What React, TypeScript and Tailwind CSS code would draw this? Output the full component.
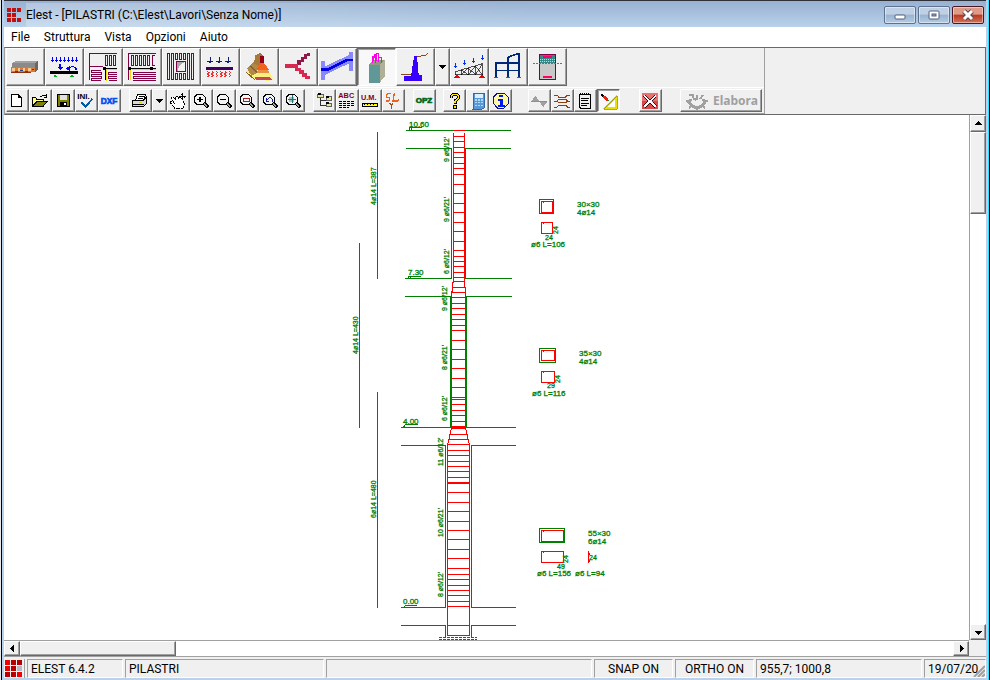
import type { ReactNode } from "react";

const RAISED =
  "border border-t-white border-l-white border-r-[#696969] border-b-[#696969] bg-[#f0f0f0] shadow-[inset_-1px_-1px_#a0a0a0]";
const PRESSED =
  "border border-t-[#696969] border-l-[#696969] border-r-white border-b-white bg-[#f8f8f8] shadow-[inset_1px_1px_#a0a0a0]";
const SUNKEN = "border border-t-[#a0a0a0] border-l-[#a0a0a0] border-r-white border-b-white";

/* Icons are drawn on a grid of three units per pixel. */
function Big({ label, box, pressed, children }: { label: string; box: string; pressed?: boolean; children: ReactNode }) {
  return (
    <button aria-label={label} className={"h-[38px] w-[39px] shrink-0 " + (pressed ? PRESSED : RAISED)}>
      <svg viewBox={box} className="block h-9 w-[37px]" fill="none" strokeWidth="3" shapeRendering="crispEdges">
        {children}
      </svg>
    </button>
  );
}

function Small({ label, box, pressed, children }: { label: string; box: string; pressed?: boolean; children: ReactNode }) {
  return (
    <button aria-label={label} className={"h-[23px] w-[23px] shrink-0 " + (pressed ? PRESSED : RAISED)}>
      <svg viewBox={box} className="block h-[21px] w-[21px]" fill="none" strokeWidth="3" shapeRendering="crispEdges">
        {children}
      </svg>
    </button>
  );
}

function Drop({ label, className }: { label: string; className: string }) {
  return (
    <button aria-label={label} className={"flex w-[15px] shrink-0 items-center justify-center " + className + " " + RAISED}>
      <svg viewBox="0 0 7 4" className="h-1 w-[7px]" shapeRendering="crispEdges">
        <path d="M0 0h7L3.500 4z" fill="#000" />
      </svg>
    </button>
  );
}

function Lens({ x, children }: { x: number; children?: ReactNode }) {
  return (
    <g transform={`translate(${x} 0)`}>
      <path d="M43 308l14 14" stroke="#000" strokeWidth="9" />
      <path d="M45 311l9 9" stroke="#a0a0a0" strokeWidth="3" />
      <path d="M24 283h15l9 9v13l-9 9H24l-9-9v-13z" fill="#f4f4f4" stroke="#000" />
      {children}
    </g>
  );
}

function Logo({ className }: { className: string }) {
  return (
    <svg viewBox="0 0 17 17" className={className} shapeRendering="crispEdges">
      <path d="M0 0h5v5H0zM0 6h5v5H0zM12 12h5v5h-5z" fill="#f00000" />
      <path d="M6 0h5v5H6zM12 0h5v5h-5zM6 6h5v5H6zM0 12h5v5H0zM6 12h5v5H6z" fill="#b80000" />
      <path d="M12 6h5v5h-5z" fill="#b8b8c8" />
    </svg>
  );
}

function TitleLogo() {
  return (
    <svg viewBox="0 0 14 14" className="ml-[3px] h-3.5 w-3.5" shapeRendering="crispEdges">
      <path d="M0 0h4v4H0zM5 0h4v4H5zM10 0h4v4h-4zM0 5h4v4H0zM5 5h4v4H5zM0 10h4v4H0zM5 10h4v4H5zM10 10h4v4h-4z" fill="#c01010" />
    </svg>
  );
}

function TitleBar() {
  const box =
    "flex h-[18px] w-8 items-center justify-center rounded-[2px] border shadow-[inset_0_0_0_1px_rgba(255,255,255,0.45)] ";
  const pale = "border-[#5d728e] bg-[linear-gradient(#c0d0e4_45%,#98b2d0_50%,#b4cce4)]";
  return (
    <header className="flex h-[27px] shrink-0 items-center border-t border-[#303038] bg-[linear-gradient(#98b1d1,#b9d1ea)] pr-0.5 pt-0.5">
      <TitleLogo />
      <h1 className="ml-[5px] flex-1 whitespace-nowrap bg-[linear-gradient(90deg,rgba(255,255,255,0.25),transparent_60%)] font-[Roboto,sans-serif] text-xs leading-6 text-black">
        Elest - [PILASTRI (C:\Elest\Lavori\Senza Nome)]
      </h1>
      <div className="flex gap-0.5">
        <button aria-label="Minimize" className={box + pale}>
          <svg viewBox="0 0 12 12" className="h-3 w-3">
            <rect x="1" y="6" width="10" height="4" rx="1" fill="#fff" stroke="#50607a" />
          </svg>
        </button>
        <button aria-label="Restore" className={box + pale}>
          <svg viewBox="0 0 12 12" className="h-3 w-3">
            <rect x="1" y="2" width="10" height="8" rx="1" fill="#fff" stroke="#50607a" />
            <rect x="4" y="5" width="4" height="2" fill="#8da6c4" stroke="#50607a" />
          </svg>
        </button>
        <button
          aria-label="Close"
          className={box + "border-[#4a1820] bg-[linear-gradient(#e09a88_45%,#b83a20_50%,#d4715a)]"}
        >
          <svg viewBox="0 0 12 12" className="h-3 w-3">
            <path d="M2 2l8 8M10 2l-8 8" stroke="#584858" strokeWidth="5" />
            <path d="M2 2l8 8M10 2l-8 8" stroke="#fff" strokeWidth="3" />
          </svg>
        </button>
      </div>
    </header>
  );
}

function Menu() {
  return (
    <nav className="flex h-[20px] shrink-0 items-center gap-3.5 bg-white pl-[7px] font-[Roboto,sans-serif] text-xs text-black">
      {["File", "Struttura", "Vista", "Opzioni", "Aiuto"].map((m) => (
        <button key={m}>{m}</button>
      ))}
    </nav>
  );
}

function MainTools() {
  return (
    <div role="toolbar" aria-label="Moduli" className="flex h-[38px] pl-px">
      <Big label="Solai" box="21 150 111 108">
        <path d="M36 193l13-8h66v10l-10 8H36z" fill="#8a8a8a" />
        <path d="M36 193l13-8h66l-9 8z" fill="#a2a2a2" />
        <path d="M106 193l9-8v25l-9 9z" fill="#686868" />
        <path d="M34 204h71v15H34z" fill="#e07828" />
        <path d="M37 208h8v7h-8zM54 208h6v7h-6zM69 208h6v7h-6zM85 208h8v7h-8z" fill="#f8c890" />
        <path d="M46 216h7M60 214h9M76 216h9M96 210h6" stroke="#204890" />
        <path d="M34 221h60" stroke="#903010" />
      </Big>
      <Big label="Travi" box="138 150 111 108">
        <path d="M157 175v15M169 175v15M181 175v15M193 175v15M205 175v15M217 175v15M229 175v15" stroke="#00f" />
        <path d="M153 184h9M165 184h9M177 184h9M189 184h9M201 184h9M213 184h9M225 184h9" stroke="#00f" />
        <path d="M181 195v10" stroke="#0000e8" strokeWidth="6" />
        <path d="M172 204h18l-9 9zM197 209l12-9v15z" fill="#00f" />
        <path d="M205 208l10-5h6l7 6v5" stroke="#00f" strokeWidth="4" />
        <path d="M150 216h84v9h-84z" fill="#000" />
        <path d="M159 235l7-9 8 9zM209 235l7-9 8 9z" fill="#00b020" />
      </Big>
      <Big label="Solaio a campi" box="255 150 111 108">
        <g stroke="#800048">
          <path d="M351 163h-82v80M269 202h40M316 169h6v29h-6zM328 169h6v29h-6zM340 169h6v29h-6z" />
          <path d="M304 213h-30v6h30v6h-30v6h30v6h-30v6h30M351 219h-25v6h25M351 231h-25v6h25M326 243h25" />
        </g>
        <path d="M351 207h-36v37" stroke="#000" />
        <path d="M318 211v34M316 210h35" stroke="#f0d820" />
        <path d="M309 204h9v9h-9z" fill="#000" />
      </Big>
      <Big label="Solaio continuo" box="372 150 111 108">
        <g stroke="#800048">
          <path d="M468 163h-82v80M394 169h6v29h-6zM406 169h6v29h-6zM418 169h6v29h-6zM430 169h6v29h-6zM442 169h6v29h-6zM466 169h-9v29h9" />
          <path d="M468 219h-68v6h68M468 231h-68v6h68M400 243h68" />
        </g>
        <path d="M388 207h80" stroke="#000" />
        <path d="M396 210h72M391 213v31" stroke="#f0d820" />
        <path d="M384 204h9v9h-9zM450 204h9v9h-9z" fill="#000" />
      </Big>
      <Big label="Piastre" box="489 150 111 108">
        <path d="M503 163h6v79h-6zM515 163h6v79h-6zM575 163h6v79h-6zM563 163h6v79h-6zM527 163h6v18h-6zM539 163h6v18h-6zM551 163h6v18h-6zM527 224h6v18h-6zM539 224h6v18h-6zM551 224h6v18h-6z" stroke="#800048" />
        <path d="M528 187h28v30h-28z" fill="#f0f0f0" stroke="#800048" />
        <path d="M530 189h25l-15 9-8 18z" fill="#a8a8a8" />
      </Big>
      <Big label="Travi di fondazione" box="606 150 111 108">
        <path d="M630 174v19M657 174v19M684 174v19M622 186h17M649 186h17M676 186h17M627 190h7M654 190h7M681 190h7" stroke="#102070" />
        <path d="M618 204h81v9h-81z" fill="#400060" />
        <path d="M622 217l5 4-5 4 5 4-5 5M635 217l5 4-5 4 5 4-5 5M648 217l5 4-5 4 5 4-5 5M661 217l5 4-5 4 5 4-5 5M674 217l5 4-5 4 5 4-5 5M687 217l5 4-5 4 5 4-5 5" stroke="#f03030" />
      </Big>
      <Big label="Plinti" box="723 150 111 108">
        <path d="M738 218l23-23 38 10 20 34-12 6-39-2z" fill="#f8f080" />
        <path d="M742 208l20-22 15 6-6 29-17 10z" fill="#b08848" />
        <path d="M765 170l16-8 9 8-9 31-19-6z" fill="#a87838" />
        <path d="M779 170h13v24h-13z" fill="#900018" />
        <path d="M778 193h15l14 20h-38z" fill="#f06020" />
        <path d="M767 221l9-8h27l5 8z" fill="#e89040" />
        <path d="M764 233h43l9 9h-48z" fill="#c84850" />
        <path d="M738 219l26 23M752 202l20 19" stroke="#886030" />
      </Big>
      <Big label="Scale" box="0 18 111 108">
        <path d="M51 67V52h12V43h9V34h9v-4h9v8h-9v9h-9v9h-9v10z" fill="#901848" />
        <path d="M15 63h39v12h9v7h9v9h9v9h9v9H75v-8h-9v-9h-9v-9H45v-7H15z" fill="#d82850" />
      </Big>
      <Big label="Travi inclinate" box="117 18 111 108">
        <path d="M123 54h12v56h-12zM207 27h12v56h-12z" fill="#8888ff" />
        <path d="M135 70l72-34v25l-72 35z" fill="#8888ff" />
        <path d="M123 80h21l57-29h18" stroke="#0000e8" strokeWidth="8" />
      </Big>
      <Big label="Pilastri" box="234 18 111 108" pressed>
        <path d="M267 66l16-16h32l-15 16z" fill="#909880" />
        <path d="M267 66h32v53h-32z" fill="#609898" />
        <path d="M299 66l16-16v49l-16 20z" fill="#b0b098" />
        <path d="M276 61V40h6v-7h5v26M288 55V31h6v26M294 42h9v19M281 54V42h9" stroke="#ff00e8" />
      </Big>
      <Big label="Muri" box="351 18 111 108">
        <path d="M363 95h32M408 40h12l9-4h9l6-6" stroke="#884818" />
        <path d="M402 40h9l5 55h10v18h-55V99h22z" fill="#3800ff" />
      </Big>
      <Drop label="Altri muri" className="h-[38px]" />
      <Big label="Capriate" box="513 18 111 108">
        <path d="M527 60v15M554 51v15M581 45v15M608 36v15M522 69h10M549 60h10M576 54h10M603 45h10" stroke="#0030f0" />
        <path d="M526 95V86L608 62V95zM543 95V81L565 95V75L586 95V69L607 94M543 95L565 75M565 95L586 69M586 95L607 63" stroke="#000" strokeWidth="2" />
        <path d="M530 95l9 9h-18zM605 95l9 9h-18z" fill="#f00000" />
      </Big>
      <Big label="Telai" box="630 18 111 108">
        <path d="M648 59v43M684 43v59M716 30v72M645 59h71M645 82h71M684 43l18-7 14-5" stroke="#002878" strokeWidth="5" />
        <path d="M642 104h12M678 104h12M710 104h12" stroke="#088058" />
      </Big>
      <Big label="Sezioni" box="747 18 111 108">
        <path d="M778 34h49v75h-49z" fill="#c8c8c8" stroke="#800048" />
        <path d="M781 37h43v23h-43z" fill="#388888" />
        <path d="M780 49h44M780 55h44" stroke="#c0d8d8" strokeDasharray="3 3" />
        <path d="M788 42h29M788 102h29" stroke="#ff0068" strokeWidth="5" />
        <path d="M759 61h87" stroke="#707070" strokeDasharray="6 3" />
      </Big>
    </div>
  );
}

function SmallTools() {
  return (
    <div role="toolbar" aria-label="Comandi" className="mt-px flex h-[26px] border-t border-white pl-px pt-px">
      <Small label="Nuovo" box="21 270 63 63">
        <path d="M35 284h20l9 9v26H35zM55 284v9h9" fill="#fff" stroke="#000" />
      </Small>
      <Small label="Apri" box="90 270 63 63">
        <path d="M98 317v-24h9l4 5h18v7" fill="#ffff80" stroke="#000" />
        <path d="M98 318l13-14h32l-13 14z" fill="#808000" stroke="#000" />
        <path d="M121 288h5l4-3h5l5 6M140 282v9h-8" stroke="#000" />
      </Small>
      <Small label="Salva" box="159 270 63 63">
        <path d="M171 284h36v34h-34l-2-2z" fill="#808000" stroke="#000" />
        <path d="M179 284h22v17h-22z" fill="#e0e0e0" />
        <path d="M179 306h22v12h-22z" fill="#000" />
        <path d="M192 308h6v8h-6z" fill="#fff" />
      </Small>
      <Small label="File INI" box="228 270 63 63">
        <text x="232" y="297" fontSize="24" fontWeight="bold" fontFamily="'Liberation Sans',sans-serif" fill="#000">INI.</text>
        <path d="M244 308l12 12 22-24" stroke="#0058a8" strokeWidth="6" />
      </Small>
      <Small label="Esporta DXF" box="297 270 63 63">
        <text x="302" y="312" fontSize="25" fontWeight="bold" fontFamily="'Liberation Sans',sans-serif" fill="#0050f0" stroke="#0050f0" strokeWidth="2">DXF</text>
      </Small>
      <div className="w-2" />
      <Small label="Stampa" box="390 270 63 63">
        <path d="M407 299l6-15h24l-6 15" fill="#fff" stroke="#000" />
        <path d="M398 300h33l8-8v19l-8 8h-33z" fill="#d8d8d8" stroke="#000" />
        <path d="M417 290h14M415 295h14M399 313h34" stroke="#000" />
        <path d="M417 307h9" stroke="#e8d800" />
      </Small>
      <Drop label="Opzioni di stampa" className="h-[23px]" />
      <Small label="Sposta vista" box="504 270 63 63">
        <path d="M524 324l-14-17 3-4 9 5-7-14 4-3 8 8-1-9 6-1 4 7 4-4 5 4 4 8 4 8-3 12z" fill="#fff" stroke="#000" strokeDasharray="6 2" />
        <path d="M546 280v19M537 290h20M543 284h6M543 296h6M540 287v6M552 287v6" stroke="#000" />
      </Small>
      <Small label="Zoom avanti" box="573 270 63 63">
        <Lens x={568}><path d="M32 290v17M24 299h17" stroke="#000" strokeWidth="4" /></Lens>
      </Small>
      <Small label="Zoom indietro" box="642 270 63 63">
        <Lens x={637}><path d="M24 299h17" stroke="#000" strokeWidth="4" /></Lens>
      </Small>
      <Small label="Zoom finestra" box="711 270 63 63">
        <Lens x={706}><path d="M23 294h18v9H23z" stroke="#a02020" /></Lens>
      </Small>
      <Small label="Zoom precedente" box="780 270 63 63">
        <Lens x={775}><path d="M24 303v-9M24 303h9M25 302l8-9h5l3 5v7" stroke="#1020a0" /></Lens>
      </Small>
      <Small label="Zoom tutto" box="849 270 63 63">
        <Lens x={844}><path d="M24 291h15v15H24z" fill="#90c8c0" /><path d="M32 286v24M21 299h23" stroke="#207070" /></Lens>
      </Small>
      <div className="w-2" />
      <Small label="Struttura dati" box="102 138 63 63">
        <path d="M120 162v22h18M120 168h18" stroke="#303030" />
        <path d="M113 150h17v11h-17zM138 158h17v11h-17zM138 177h17v11h-17z" fill="#e8e8a0" stroke="#606060" />
        <path d="M113 150h9M138 158h9M138 177h9" stroke="#000" strokeWidth="5" />
      </Small>
      <Small label="Testi" box="171 138 63 63">
        <text x="175" y="162" fontSize="22" fontWeight="bold" fontFamily="'Liberation Sans',sans-serif" fill="#800010">ABC</text>
        <path d="M177 172h48M177 178h48M177 184h48M177 190h30" stroke="#000" strokeDasharray="9 3" />
      </Small>
      <Small label="Unita di misura" box="240 138 63 63">
        <text x="243" y="168" fontSize="22" fontWeight="bold" fontFamily="'Liberation Sans',sans-serif" fill="#800010">U.M.</text>
        <path d="M247 178h45v9h-45z" fill="#ffff00" stroke="#000" />
        <path d="M254 177v5M263 177v5M272 177v5M281 177v5" stroke="#000" />
      </Small>
      <Small label="Stato limite" box="309 138 63 63">
        <path d="M334 149h-10l-4 5v5l9 3v5l-3 4h-8M343 148l-4 23h15l3-5" stroke="#f06020" strokeWidth="4" />
        <path d="M328 176l6 7 6-7M334 180v16" stroke="#a05020" strokeWidth="4" />
      </Small>
      <div className="w-2" />
      <Small label="Opzioni" box="402 138 63 63">
        <text x="407" y="178" fontSize="24" fontWeight="bold" fontFamily="'Liberation Sans',sans-serif" fill="#003818" stroke="#007020" strokeWidth="2">OPZ</text>
      </Small>
      <div className="w-[7px]" />
      <Small label="Guida" box="492 138 63 63">
        <path d="M514 162v-6l5-5h10l6 5v7l-10 8v8" stroke="#000" strokeWidth="9" />
        <path d="M514 162v-6l5-5h10l6 5v7l-10 8v7" stroke="#ffe800" strokeWidth="4" />
        <path d="M521 185h9v9h-9z" fill="#ffe800" stroke="#000" />
      </Small>
      <Small label="Calcolatrice" box="561 138 63 63">
        <path d="M582 147h31v44l-6 4h-28z" fill="#5898d8" stroke="#3068a8" />
        <path d="M586 151h23v10h-23z" fill="#d8f0ff" />
        <path d="M585 168h24M585 176h24M585 184h24" stroke="#b0d8f8" strokeWidth="4" strokeDasharray="5 4" />
      </Small>
      <Small label="Informazioni" box="630 138 63 63">
        <path d="M652 147h20l14 14v16l-14 15h-20l-13-15v-16z" fill="#fff8a0" stroke="#101080" />
        <path d="M658 152h11v8h-11zM654 164h15v19h6v6h-22v-6h6v-13h-5z" fill="#0018f0" />
      </Small>
      <div className="w-4" />
      <Small label="Diagrammi" box="750 138 63 63">
        <path d="M757 171l12-15 12 15zM779 171h27l-13 18z" fill="#a0a0a0" />
        <path d="M757 171h48" stroke="#909090" />
      </Small>
      <Small label="Armature" box="819 138 63 63">
        <path d="M825 153h9l5 6h21l5-6h9M825 171h9l5-6h21l5 6h9M834 171l5 5h21l5-5M825 189h9l5-6h21l5 6h9" stroke="#904010" />
      </Small>
      <Small label="Relazione" box="18 138 63 63">
        <path d="M31 151h34v41H35l-4-4z" fill="#f0f0f0" stroke="#000" />
        <path d="M34 149h30" stroke="#000" strokeWidth="7" strokeDasharray="3 3" />
        <path d="M37 163h22M37 170h20M37 177h22M37 184h16" stroke="#000" strokeDasharray="7 2" />
      </Small>
      <Small label="Disegno" box="87 138 63 63" pressed>
        <path d="M141 159v34h-34z" fill="#fff" stroke="#e8e000" strokeWidth="6" />
        <path d="M144 155v40h-40z" stroke="#808000" strokeWidth="2" />
        <path d="M97 151l9 8" stroke="#000" strokeWidth="6" />
        <path d="M103 157l12 10" stroke="#f02010" strokeWidth="8" />
        <path d="M114 165l5 7" stroke="#208030" strokeWidth="4" />
      </Small>
      <div className="w-[19px]" />
      <Small label="Chiudi" box="213 138 63 63">
        <path d="M219 147h48v48h-48z" fill="#d84848" />
        <path d="M219 147h48v24h-48z" fill="#e87070" />
        <path d="M226 155l34 33M260 155l-34 33" stroke="#400810" strokeWidth="9" />
        <path d="M226 155l34 33M260 155l-34 33" stroke="#fff" strokeWidth="5" />
      </Small>
      <div className="w-[18px]" />
      <button
        disabled
        className={"flex h-[23px] w-[82px] shrink-0 items-center gap-[5px] pl-[5px] font-['Noto_Sans',sans-serif] text-xs font-bold text-[#a0a0a0] " + RAISED}
      >
        <svg viewBox="0 0 22 18" className="h-[18px] w-[22px] shrink-0" fill="none" shapeRendering="crispEdges">
          <path d="M5 7l-2 3 3 4 5 2 5-2 3-4-2-3" stroke="#a0a0a0" strokeWidth="3" />
          <path d="M3 3h4v3M7 6l3 2M11 3v5M17 3l-3 4M0 9h5M17 9h5M3 16l4-3M11 15v3M19 16l-4-3" stroke="#a0a0a0" strokeWidth="2" />
        </svg>
        Elabora
      </button>
    </div>
  );
}

const upperRungs = [130, 136, 141, 147, 152, 157, 163, 168, 174, 184, 193, 203, 212, 222, 231, 241, 250, 256, 261, 266, 272, 277, 281, 287];
const middleRungs = [292, 297, 303, 308, 314, 319, 325, 330, 340, 349, 359, 368, 378, 387, 397, 399, 404, 410, 415, 421, 426, 428];
const lowerRungs = [444, 450, 455, 461, 466, 471, 477, 482, 483, 492, 502, 511, 521, 530, 539, 549, 558, 568, 574, 579, 585, 590, 595, 601, 606, 625, 635];

const notes: [number, number, string][] = [
  [409, 127, "10.60"], [408, 275, "7.30"], [403, 424, "4.00"], [403, 604, "0.00"],
  [577, 207, "30×30"], [577, 215, "4ø14"], [531, 247, "ø6 L=106"],
  [579, 356, "35×30"], [579, 364, "4ø14"], [532, 396, "ø6 L=116"],
  [588, 536, "55×30"], [588, 544, "6ø14"], [537, 576, "ø6 L=156"], [575, 576, "ø6 L=94"],
];

const tinyNotes: [number, number, string][] = [
  [545, 240, "24"], [547, 388, "29"], [557, 569, "49"], [589, 560, "24"],
];

const uprightNotes: [number, number, string][] = [
  [376, 205, "4ø14 L=387"], [358, 354, "4ø14 L=430"], [376, 518, "6ø14 L=480"],
  [449, 162, "9 ø6/12'"], [449, 222, "9 ø6/21'"], [449, 274, "6 ø6/12'"],
  [447, 311, "9 ø6/12'"], [447, 370, "8 ø6/21'"], [447, 421, "6 ø6/12'"],
  [443, 466, "11 ø6/12'"], [443, 537, "10 ø6/21'"], [443, 597, "8 ø6/12'"],
  [558, 234, "24"], [560, 383, "24"], [568, 563, "24"],
];

function Drawing() {
  return (
    <svg viewBox="4 115 965 525" className="block h-[525px] w-[965px]" fill="none" aria-label="Pilastrata">
      <g stroke="#008000" shapeRendering="crispEdges" transform="translate(0.4 0.4)">
        <path d="M406 130H511M406 148H451V278H405M511 148H465V278H512M405 296H450V427M512 296H466V427M401 427H516M401 445H445V607H401M516 445H471V607H516M401 625H445V637M516 625H471V637" />
        <path d="M409 130V127H422M411 130v-2M408 278V276H421M410 278v-1M403 427L405 424H418M403 607L405 605H417" />
        <path d="M439 637H477M439 639H477" strokeDasharray="3 1" />
        <path d="M539 199h14v14h-14zM539 348h16v14h-16zM539 528h25v14h-25z" />
      </g>
      <g stroke="#ff0000" shapeRendering="crispEdges" transform="translate(0.4 0.4)">
        <path d="M377 132V279M359 243V428M377 392V608" />
        <path d="M453 133V283M464 133V287M452 282V292M465 287V430M451 291V430M450 430V434M449 434V439M448 439V443M447 443V636M466 430V434M467 434V439M468 439V443M469 443V636M449 434H467M448 439H469" />
        <path d={upperRungs.map((y) => `M453 ${y}H465`).join("")} />
        <path d={middleRungs.map((y) => `M451 ${y}H466`).join("")} />
        <path d={lowerRungs.map((y) => `M447 ${y}H470`).join("")} />
        <path d="M541 201h11v11h-11zM541 222h11v11h-11zM541 350h13v10h-13zM541 371h13v11h-13zM541 530h22v11h-22zM541 551h22v11h-22z" />
        <path d="M542 203l2-2M542 224l2-2M542 352l2-2M542 373l2-2M542 532l2-2M542 553l2-2M588 551V563M589 553v2M589 560v2" />
      </g>
      <g fill="#008000" stroke="#008000" strokeWidth="0.3" className="font-['Liberation_Sans',sans-serif]">
        {notes.map(([x, y, t], i) => (
          <text key={i} x={x} y={y} className="text-[8px]">{t}</text>
        ))}
        {tinyNotes.map(([x, y, t], i) => (
          <text key={i} x={x} y={y} className="text-[7px]">{t}</text>
        ))}
        {uprightNotes.map(([x, y, t], i) => (
          <text key={i} transform={`translate(${x} ${y}) rotate(-90)`} className="text-[7px]">{t}</text>
        ))}
      </g>
    </svg>
  );
}

function Arrow({ label, d, className }: { label: string; d: string; className: string }) {
  return (
    <button aria-label={label} className={"flex shrink-0 items-center justify-center " + className + " " + RAISED}>
      <svg viewBox="0 0 7 7" className="h-[7px] w-[7px]" shapeRendering="crispEdges">
        <path d={d} fill="#000" />
      </svg>
    </button>
  );
}

function StatusBar() {
  const cell = "flex h-[19px] items-center whitespace-nowrap " + SUNKEN;
  return (
    <footer className="flex h-[22px] shrink-0 gap-0.5 border-t border-[#a0a0a0] bg-[#f0f0f0] pl-px pt-0.5 font-[Roboto,sans-serif] text-xs text-black">
      <div className="w-5 shrink-0 border-r border-[#a0a0a0]">
        <Logo className="mt-px h-[17px] w-[17px]" />
      </div>
      <div className={cell + " w-24 shrink-0 pl-[3px]"}>ELEST 6.4.2</div>
      <div className={cell + " w-[199px] shrink-0 pl-[3px]"}>PILASTRI</div>
      <div className={cell + " flex-1"} />
      <div className={cell + " w-[79px] shrink-0 justify-center"}>SNAP ON</div>
      <div className={cell + " w-[79px] shrink-0 justify-center"}>ORTHO ON</div>
      <div className={cell + " w-[166px] shrink-0 pl-[3px]"}>955,7; 1000,8</div>
      <div className={cell + " relative w-[62px] shrink-0 pl-[3px]"}>
        19/07/20
        <svg viewBox="0 0 12 12" className="absolute right-0 bottom-0 h-3 w-3">
          <path d="M1 12L12 1M5 12l7-7M9 12l3-3" stroke="#a0a0a0" strokeWidth="2" />
        </svg>
      </div>
    </footer>
  );
}

export default function App() {
  return (
    <div className="flex h-screen w-full overflow-hidden bg-[#e8e8e8] pl-px">
      <div className="flex min-w-0 flex-1 flex-col border-x border-black bg-[#b9d1ea] pb-0.5 pl-0.5 pr-[3px] shadow-[inset_-1px_0_#30e0ff]">
        <TitleBar />
        <Menu />
        <div className="h-[68px] shrink-0 border border-[#696969] border-l-[#a0a0a0] bg-[#f0f0f0]">
          <div className="h-[66px] w-[760px] border-b border-r border-[#a0a0a0]">
            <MainTools />
            <SmallTools />
          </div>
        </div>
        <div className="flex min-h-0 flex-1">
          <main className="flex min-w-0 flex-1 flex-col bg-white">
            <div className="min-h-0 flex-1 overflow-hidden">
              <Drawing />
            </div>
            <div className="flex h-4 shrink-0 border-t border-[#a0a0a0]">
              <Arrow label="Scorri a sinistra" className="w-4" d="M5 0v7L1 3.500z" />
              <div className={"w-[156px] " + RAISED} />
              <div className="flex-1" />
              <Arrow label="Scorri a destra" className="w-4" d="M2 0v7L6 3.500z" />
            </div>
          </main>
          <div className="flex w-[17px] shrink-0 flex-col bg-[#f0f0f0]">
            <div className="flex min-h-0 flex-1 flex-col border-l border-[#a0a0a0] bg-white">
              <Arrow label="Scorri in alto" className="h-[17px]" d="M0 5h7L3.500 1z" />
              <div className={"h-[82px] " + RAISED} />
              <div className="flex-1" />
              <Arrow label="Scorri in basso" className="h-4" d="M0 2h7L3.500 6z" />
            </div>
            <div className="h-4" />
          </div>
        </div>
        <StatusBar />
      </div>
    </div>
  );
}
